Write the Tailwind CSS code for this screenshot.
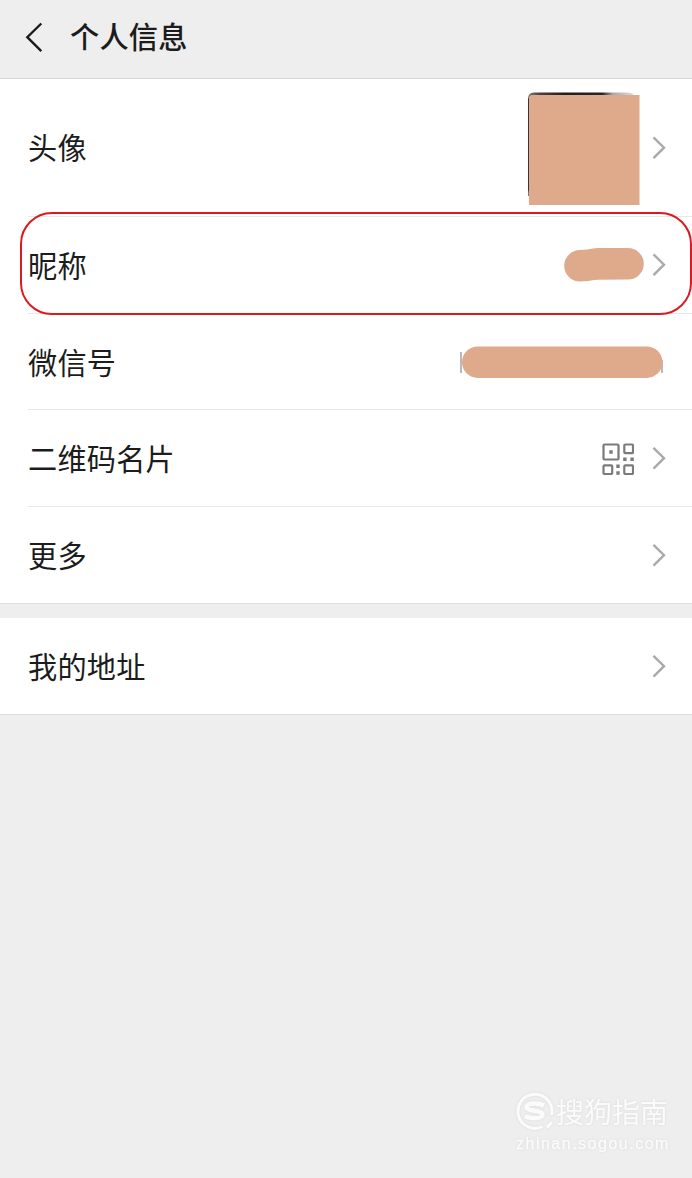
<!DOCTYPE html>
<html lang="zh-CN">
<head>
    <meta charset="UTF-8">
    <meta name="viewport" content="width=device-width, initial-scale=1.0">
    <title>个人信息</title>
    <script src="https://cdn.jsdelivr.net/npm/@tailwindcss/browser@4"></script>
</head>
<body class="relative flex h-[1178px] flex-col overflow-hidden bg-[#eeeeee] font-['Noto_Sans_CJK_SC',sans-serif] text-[29.2px] leading-none tracking-[0.2px] text-[#1c1c1c]">

    <!-- Header -->
    <header class="flex h-[79px] shrink-0 items-center border-b border-[#d6d6d6] pb-1 pl-6">
        <svg class="h-8 w-5" viewBox="0 0 20 32" fill="none" stroke="#1c1c1c" stroke-width="2.4">
            <path d="M17.3 2.500 3.300 16.200l14 13.900"/>
        </svg>
        <h1 class="ml-[26px] pb-[3px] font-medium">个人信息</h1>
    </header>

    <!-- Profile rows -->
    <main>
        <section class="border-b border-[#dedede] bg-white pl-7">
            <div class="flex h-[138px] items-center border-b border-[#e8e8e8] pr-[26px]">
                <span class="flex-1 pb-px">头像</span>
                <svg class="mt-[3px] mr-3 h-[114px] w-[113px]" viewBox="0 0 113 114">
                    <defs>
                        <linearGradient id="avatarEdge">
                            <stop offset="0" stop-color="#777"/>
                            <stop offset=".12" stop-color="#493f42"/>
                            <stop offset=".35" stop-color="#211c22"/>
                            <stop offset=".7" stop-color="#29242c"/>
                            <stop offset=".8" stop-color="#aaa6ae"/>
                            <stop offset="1" stop-color="#ded9dc"/>
                        </linearGradient>
                    </defs>
                    <path d="M1 104V7q0-6.500 6-6.500h93q6 0 7 3v100z" fill="url(#avatarEdge)"/>
                    <path d="M1 98V7l2-3v98z" fill="#3c3434"/>
                    <path d="M2 5l2-2h108.500v110H2z" fill="#dfaa8b"/>
                </svg>
                <svg class="h-6 w-[14px]" viewBox="0 0 14 24" fill="none" stroke="#aaaaaa" stroke-width="2.4">
                    <path d="M1.500 1.300 12 11.700 1.500 22.100"/>
                </svg>
            </div>
            <div class="flex h-[97px] items-center border-b border-[#e8e8e8] pr-[26px]">
                <span class="flex-1 pb-px">昵称</span>
                <svg class="mr-2 h-[34px] w-20" viewBox="0 0 80 34">
                    <path d="M16 2Q24 1.800 29 .4L34 .1 64 0A15.800 15.800 0 0 1 64 31.600L34 31.800Q28 32 24 33L16 33.600A15.800 15.800 0 0 1 16 2z" fill="#dfaa8b"/>
                </svg>
                <svg class="h-6 w-[14px]" viewBox="0 0 14 24" fill="none" stroke="#aaaaaa" stroke-width="2.4">
                    <path d="M1.500 1.300 12 11.700 1.500 22.100"/>
                </svg>
            </div>
            <div class="flex h-[96px] items-center border-b border-[#e8e8e8] pr-[29px]">
                <span class="flex-1">微信号</span>
                <svg class="h-8 w-[203px]" viewBox="0 0 203 32">
                    <path d="M1 6v21M202 14v13" stroke="#a8a8a8" stroke-width="1.600"/>
                    <rect x="2" y=".4" width="200.500" height="31.600" rx="15.800" fill="#dfaa8b"/>
                </svg>
            </div>
            <div class="flex h-[97px] items-center border-b border-[#e8e8e8] pr-[26px]">
                <span class="flex-1">二维码名片</span>
                <svg class="mt-px mr-[18px] h-8 w-8" viewBox="0 0 32 32">
                    <g fill="none" stroke="#7b7b7b" stroke-width="2.200">
                        <rect x="1.500" y="1.500" width="15" height="15" rx="1"/>
                        <rect x="22.300" y="1.500" width="8.700" height="8.700" rx="1"/>
                        <rect x="1.500" y="22.300" width="8.700" height="8.700" rx="1"/>
                        <rect x="22.300" y="22.300" width="8.700" height="8.700" rx="1"/>
                    </g>
                    <path d="M7.300 7.300h3.400v3.400H7.300zM21.200 14.500h3.400v3.400h-3.400zM28.400 14.500h3.400v3.400h-3.400zM14.300 21.500h3.400v3.400h-3.400zM14.300 28.300h3.400v3.400h-3.400z" fill="#7b7b7b"/>
                </svg>
                <svg class="h-6 w-[14px]" viewBox="0 0 14 24" fill="none" stroke="#aaaaaa" stroke-width="2.4">
                    <path d="M1.500 1.800 12 12.200 1.500 22.600"/>
                </svg>
            </div>
            <div class="flex h-24 items-center pr-[26px]">
                <span class="flex-1 pb-px">更多</span>
                <svg class="h-6 w-[14px]" viewBox="0 0 14 24" fill="none" stroke="#aaaaaa" stroke-width="2.4">
                    <path d="M1.500 1.800 12 12.200 1.500 22.600"/>
                </svg>
            </div>
        </section>

        <section class="mt-[14px] flex h-[97px] items-center border-b border-[#dedede] bg-white pr-[26px] pl-7">
            <span class="flex-1 pb-px">我的地址</span>
            <svg class="h-6 w-[14px]" viewBox="0 0 14 24" fill="none" stroke="#aaaaaa" stroke-width="2.4">
                <path d="M1.500 1.800 12 12.200 1.500 22.600"/>
            </svg>
        </section>
    </main>

    <!-- Highlight around the nickname row -->
    <div class="absolute top-[212px] left-[20px] h-[103px] w-[672px] rounded-[32px] border-2 border-[#dc1a20]"></div>

    <!-- Watermark -->
    <footer class="mt-auto mr-6 mb-6 ml-auto w-[152px] text-[#fbfbfb] drop-shadow-[0_0_1px_#d8d8d8]">
        <div class="flex items-center">
            <svg class="h-[38px] w-[38px] shrink-0" viewBox="0 0 38 38" fill="none" stroke="#fbfbfb">
                <path d="M26.500 34.500A17 17 0 1 1 35.500 23" stroke-width="3"/>
                <path d="M28 13.500C23 10.500 10.500 10.500 10.500 15c0 4.500 16 3 16 7.500 0 4.500-12 4.500-17.500 1.800" stroke-width="4.500"/>
                <path d="m31 35.500 5-5.500" stroke-width="3.200"/>
            </svg>
            <span class="ml-[2px] text-[28px] font-normal tracking-normal whitespace-nowrap">搜狗指南</span>
        </div>
        <p class="mt-1 font-['Liberation_Sans',sans-serif] text-base leading-5 tracking-[1.5px] whitespace-nowrap [-webkit-text-stroke:0.3px_#fbfbfb]">zhinan.sogou.com</p>
    </footer>
</body>
</html>
